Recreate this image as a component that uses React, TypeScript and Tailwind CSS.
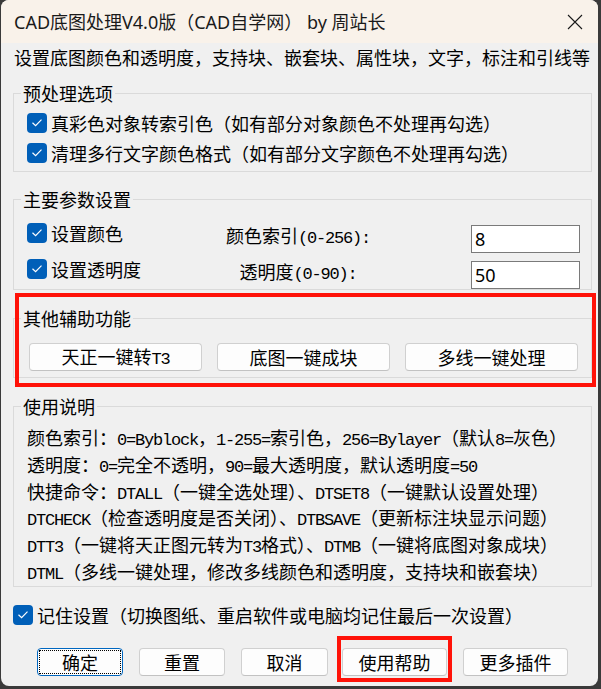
import React from 'react';

// latin runs in the old dialog font are half the width of a CJK glyph
const Mixed: React.FC<{ text: string }> = ({ text }) => {
  const parts = text.split(/([\x20-\x7e]+)/);
  return (
    <>
      {parts.map((p, i) =>
        /^[\x20-\x7e]+$/.test(p) ? (
          <span
            key={i}
            className="font-['Liberation_Mono',monospace] text-[17px] leading-none tracking-[-1.2px]"
          >
            {p}
          </span>
        ) : (
          <React.Fragment key={i}>{p}</React.Fragment>
        )
      )}
    </>
  );
};

const CheckBox: React.FC = () => (
  <span className="flex h-[20px] w-[20px] shrink-0 items-center justify-center rounded-[4px] bg-[#005fb8]">
    <svg width="20" height="20" viewBox="0 0 20 20">
      <path d="M5.5 9.8 L8.6 12.7 L14.5 6.6" fill="none" stroke="white" strokeWidth="1.2" />
    </svg>
  </span>
);

const Group: React.FC<{ title: string; className?: string; children: React.ReactNode }> = ({
  title,
  className = '',
  children,
}) => (
  <fieldset className={'min-w-0 border border-[#dadada] ' + className}>
    <legend className="ml-[7px] px-[2px] text-[18px] leading-[24px]">{title}</legend>
    {children}
  </fieldset>
);

const Btn: React.FC<{ label: string; className?: string }> = ({ label, className = '' }) => (
  <button
    className={
      'flex h-[28px] items-center justify-center rounded-[4px] border border-[#d0d0d0] border-b-[#c2c2c2] bg-[#fdfdfd] text-[18px] leading-[20px] text-black ' +
      className
    }
  >
    <span>
      <Mixed text={label} />
    </span>
  </button>
);

export default function App() {
  return (
    <div className="h-[689px] w-[601px] bg-[#3a3a3a] pb-[3px] pl-px pr-[3px] font-['Noto_Sans_CJK_SC',sans-serif] text-[18px] text-black">
      <div className="relative h-full overflow-hidden rounded-[8px] bg-[#f0f0f0]">
        {/* Title bar */}
        <div className="flex h-[43px] items-center justify-between bg-[#f9f2ea] pl-[13px] pr-[15px]">
          <span className="font-['Noto_Sans','Noto_Sans_CJK_SC',sans-serif] text-[18px] leading-none text-[#1a1a1a]">
            CAD底图处理V4.0版（CAD自学网） by 周站长
          </span>
          <svg width="16" height="16" viewBox="0 0 16 16">
            <path d="M1 1 L15 15 M15 1 L1 15" stroke="#1a1a1a" strokeWidth="1.1" fill="none" />
          </svg>
        </div>

        <div className="flex flex-col pl-[12px] pr-[6px] pt-[2px]">
          <div className="ml-px h-[24px] whitespace-nowrap leading-[24px]">
            设置底图颜色和透明度，支持块、嵌套块、属性块，文字，标注和引线等
          </div>

          {/* 预处理选项 */}
          <Group title="预处理选项" className="mt-[12px]">
            <div className="flex flex-col pb-[3px] pl-[13px] pt-[3px]">
              <div className="flex h-[30px] items-center gap-[4px]">
                <CheckBox />
                <span className="whitespace-nowrap leading-[20px]">真彩色对象转索引色（如有部分对象颜色不处理再勾选）</span>
              </div>
              <div className="flex h-[30px] items-center gap-[4px]">
                <CheckBox />
                <span className="whitespace-nowrap leading-[20px]">清理多行文字颜色格式（如有部分文字颜色不处理再勾选）</span>
              </div>
            </div>
          </Group>

          {/* 主要参数设置 */}
          <Group title="主要参数设置" className="mt-[15px]">
            <div className="flex flex-col pl-[13px] pr-[11px] pt-[6px]">
              {[
                { cb: '设置颜色', label: '颜色索引(0-256):', value: '8' },
                { cb: '设置透明度', label: '透明度(0-90):', value: '50' },
              ].map((r) => (
                <div key={r.cb} className="flex h-[36px] items-start">
                  <div className="mt-[6px] flex w-[173px] items-center gap-[4px]">
                    <CheckBox />
                    <span className="leading-[20px]">{r.cb}</span>
                  </div>
                  <div className="mt-[6px] h-[24px] w-[196px] text-center leading-[24px]">
                    <Mixed text={r.label} />
                  </div>
                  <div className="ml-auto mt-[8px] flex h-[28px] w-[109px] items-center border border-[#7a7a7a] bg-white pl-[3px] font-['Noto_Sans',sans-serif] text-[18px] leading-none">
                    {r.value}
                  </div>
                </div>
              ))}
            </div>
          </Group>

          {/* 其他辅助功能 */}
          <Group title="其他辅助功能" className="mt-[16px]">
            <div className="grid grid-cols-3 gap-[15px] pb-[6px] pl-[15px] pr-[13px] pt-[13px]">
              <Btn label="天正一键转T3" />
              <Btn label="底图一键成块" />
              <Btn label="多线一键处理" />
            </div>
          </Group>

          {/* 使用说明 */}
          <Group title="使用说明" className="mt-[16px]">
            <div className="flex flex-col whitespace-nowrap pb-[1px] pl-[13px] pt-[6px]">
              {[
                '颜色索引：0=Byblock，1-255=索引色，256=Bylayer（默认8=灰色）',
                '透明度：0=完全不透明，90=最大透明度，默认透明度=50',
                '快捷命令：DTALL（一键全选处理）、DTSET8（一键默认设置处理）',
                'DTCHECK（检查透明度是否关闭）、DTBSAVE（更新标注块显示问题）',
                'DTT3（一键将天正图元转为T3格式）、DTMB（一键将底图对象成块）',
                'DTML（多线一键处理，修改多线颜色和透明度，支持块和嵌套块）',
              ].map((t) => (
                <div key={t} className="h-[26.8px] leading-[26.8px]">
                  <Mixed text={t} />
                </div>
              ))}
            </div>
          </Group>

          <div className="mt-[13px] flex h-[30px] items-center gap-[4px]">
            <CheckBox />
            <span className="whitespace-nowrap leading-[20px]">记住设置（切换图纸、重启软件或电脑均记住最后一次设置）</span>
          </div>

          <div className="mt-[18px] flex">
            <button className="ml-[24px] h-[28px] w-[86px] rounded-[4px] border border-[#0067c0] bg-[#fdfdfd] p-px">
              <span className="flex h-full w-full items-center justify-center border border-dotted border-black text-[18px] leading-none">
                确定
              </span>
            </button>
            <Btn label="重置" className="ml-[16px] w-[86px]" />
            <Btn label="取消" className="ml-[16px] w-[87px]" />
            <Btn label="使用帮助" className="ml-[14px] w-[105px]" />
            <Btn label="更多插件" className="ml-[16px] w-[105px]" />
          </div>
        </div>

        {/* red annotation frames */}
        <div className="pointer-events-none absolute left-[14px] top-[293px] h-[94px] w-[581px] border-[4px] border-[#ff1208]" />
        <div className="pointer-events-none absolute left-[336px] top-[636px] h-[46px] w-[115px] border-[4px] border-[#ff1208]" />
      </div>
    </div>
  );
}
